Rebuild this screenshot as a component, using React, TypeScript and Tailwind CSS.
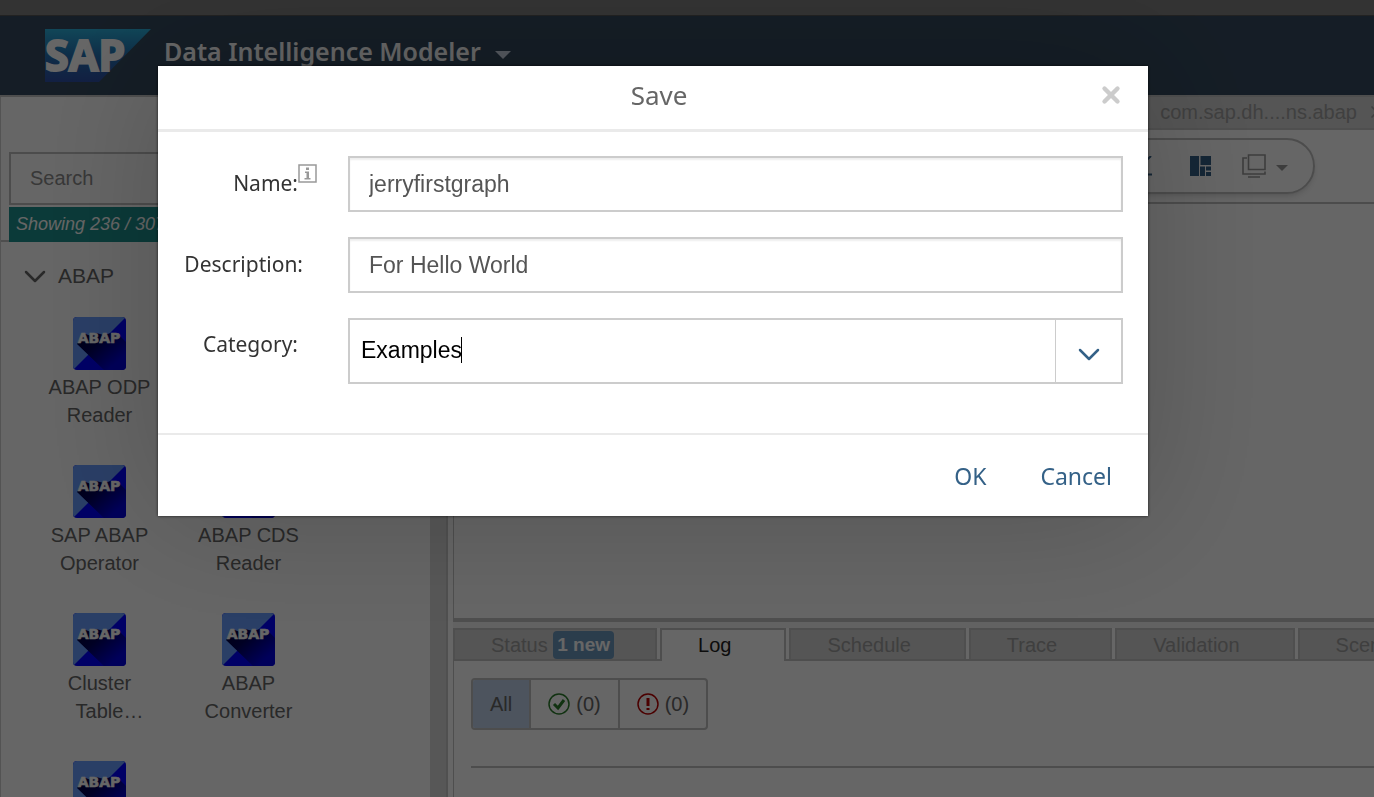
import { ReactNode } from "react";
import { X } from "lucide-react";

const operators = [
  "ABAP ODP Reader",
  "ABAP File Reader",
  "SAP ABAP Operator",
  "ABAP CDS Reader",
  "Cluster Table Splitter",
  "ABAP Converter",
  "SLT Connector",
];

function SapLogo() {
  return (
    <svg width="106" height="53" viewBox="0 0 106 53" role="img" aria-label="SAP">
      <defs>
        <linearGradient id="sap" x1="0" y1="0" x2="0" y2="1">
          <stop offset="0" stopColor="#2cb0dc" />
          <stop offset="0.5" stopColor="#2471b4" />
          <stop offset="1" stopColor="#2e4fa6" />
        </linearGradient>
      </defs>
      <path d="M0 0H106L54 53H0Z" fill="url(#sap)" />
      <text
        x="0"
        y="42"
        fill="#fff"
        stroke="#fff"
        strokeWidth="2"
        className="font-['Open_Sans',sans-serif] text-[43px] font-bold"
      >
        SAP
      </text>
    </svg>
  );
}

function AbapIcon() {
  return (
    <svg width="53" height="53" viewBox="0 0 53 53" aria-hidden="true" className="block">
      <defs>
        <linearGradient id="shade" x1="0.1" y1="0" x2="0.9" y2="0.7">
          <stop offset="0" stopColor="#000038" />
          <stop offset="0.4" stopColor="#00005a" />
          <stop offset="1" stopColor="#0000e0" />
        </linearGradient>
        <clipPath id="tile">
          <rect width="53" height="53" rx="4" />
        </clipPath>
      </defs>
      <g clipPath="url(#tile)">
        <rect width="53" height="53" fill="#0000ff" />
        <path d="M0 0H53L0 53Z" fill="#699dff" />
        <path d="M4 27L10 16L18 19L23 16L31 18L38 16L47 19L53 25V53H31Z" fill="url(#shade)" />
        <text
          x="26"
          y="26"
          textAnchor="middle"
          fill="#fff"
          stroke="#fff"
          strokeWidth="0.6"
          className="font-['DejaVu_Sans',sans-serif] text-[14px] font-bold"
        >
          ABAP
        </text>
      </g>
    </svg>
  );
}

function Caret({ className }: { className: string }) {
  return (
    <svg width="16" height="8" viewBox="0 0 16 8" aria-hidden="true" className={className}>
      <path d="M0 0H16L8 8Z" fill="currentColor" />
    </svg>
  );
}

function Chevron() {
  return (
    <svg width="22" height="13" viewBox="0 0 22 13" fill="none" stroke="currentColor" strokeWidth="2.5" strokeLinecap="round" strokeLinejoin="round" aria-hidden="true">
      <path d="M2 2L11 11L20 2" />
    </svg>
  );
}

function InfoIcon() {
  return (
    <svg width="19" height="19" viewBox="0 0 19 19" aria-hidden="true">
      <path d="M1 1H18V18H1Z" fill="none" stroke="#999" strokeWidth="1.5" />
      <path d="M8 3.5H11V6H8ZM7 7.500H11V14H12.500V15.500H6.500V14H8.500V9H7Z" fill="#999" />
    </svg>
  );
}

function Sidebar() {
  return (
    <aside className="flex w-[448px] shrink-0 border-l border-[#cfcfcf]">
      <div className="flex min-w-0 flex-1 flex-col">
        <div className="border-b-2 border-[#c4c4c4] pt-[55px] pr-3 pl-2">
          <input
            type="text"
            aria-label="Search"
            placeholder="Search"
            className="block h-[53px] w-full border-2 border-[#bfbfbf] bg-white px-[19px] text-[20px] placeholder:text-[#8c8c8c]"
          />
          <div className="-mb-[2px] mt-[2px] h-[35px] bg-[#1c918e] px-[7px] text-[18px] leading-[35px] text-white italic">
            Showing 236 / 307
          </div>
        </div>
        <button className="flex items-center gap-3 pt-[18px] pl-[23px] text-[21px] leading-[32px] text-[#666]">
          <Chevron />
          ABAP
        </button>
        <div className="mt-[25px] grid grid-cols-[149px_149px] gap-y-9 pl-6">
          {operators.map((name) => (
            <div key={name} className="flex flex-col items-center">
              <AbapIcon />
              <div className="mt-[3px] line-clamp-2 w-[107px] text-center text-[20px] leading-[28px] text-[#666]">
                {name}
              </div>
            </div>
          ))}
        </div>
      </div>
      <div className="w-[18px] border-r-2 border-[#c8c8c8] bg-[#dadada]" />
    </aside>
  );
}

function Toolbar() {
  return (
    <div className="border-b-2 border-[#bfbfbf] py-2 pr-[59px] pl-5">
      <div className="flex h-14 items-center justify-end rounded-full border-2 border-[#bfbfbf] pr-[25px] shadow-md">
        <svg width="22" height="20" viewBox="0 0 22 20" aria-hidden="true" className="mr-[38px]">
          <path d="M2 18L21 0M2 18.500H22" stroke="#346187" strokeWidth="2" fill="none" />
        </svg>
        <svg width="21" height="21" viewBox="0 0 21 21" aria-hidden="true" fill="#346187">
          <path d="M0 0H9V20H0ZM10.500 0H21V9H10.500ZM10 10.500H15V20H10ZM16 10.500H21V14.500H16ZM16 16H21V20H16Z" />
        </svg>
        <svg width="24" height="24" viewBox="0 0 24 24" aria-hidden="true" className="ml-[31px]" fill="none" stroke="#999" strokeWidth="1.6">
          <path d="M6.500 1H23V15.500H6.500ZM5 4H1V20H23V17.500M6 23H18" />
        </svg>
        <Caret className="mt-1 ml-[10px] w-3 text-[#999]" />
      </div>
    </div>
  );
}

function Tab({ children, active }: { children: ReactNode; active?: boolean }) {
  return (
    <button
      role="tab"
      aria-selected={active ? true : false}
      className={
        active
          ? "-mb-[2px] h-[33px] shrink-0 border-2 border-b-0 border-[#c4c4c4] bg-white pr-[53px] pl-9 pb-[2px] text-[#222]"
          : "h-[31px] shrink-0 border-2 border-b-0 border-[#c6c6c6] bg-[#d4d4d4] pr-[53px] pl-9 text-[#9e9e9e] first:pr-[41px]"
      }
    >
      {children}
    </button>
  );
}

function LogPanel() {
  return (
    <section className="h-[169px] shrink-0 overflow-hidden">
      <div role="tablist" className="flex gap-[3px] border-b-2 border-[#c4c4c4] text-[20px] leading-[28px]">
        <Tab>
          Status{" "}
          <span className="inline-block h-[28px] rounded bg-[#6c98be] px-1 align-top text-[19px] font-bold text-white">
            1 new
          </span>
        </Tab>
        <Tab active>Log</Tab>
        <Tab>Schedule</Tab>
        <Tab>Trace</Tab>
        <Tab>Validation</Tab>
        <Tab>Scenario</Tab>
      </div>
      <div className="h-full border-l border-[#c4c4c4] pt-[17px] pl-[17px] text-[20px] text-[#666]">
        <div className="inline-flex h-[52px] divide-x-2 divide-[#c0c0c0] overflow-hidden rounded border-2 border-[#c0c0c0] align-top">
          <button className="bg-[#c0d2eb] px-[17px]">All</button>
          <button className="flex items-center gap-[6px] px-[17px]">
            <svg width="22" height="22" viewBox="0 0 22 22" fill="none" stroke="#2b7d2b" aria-label="Success">
              <circle cx="11" cy="11" r="10" strokeWidth="1.5" />
              <path d="M6 11L10 15L16 7" strokeWidth="3" />
            </svg>
            (0)
          </button>
          <button className="flex items-center gap-[6px] px-[17px]">
            <svg width="22" height="22" viewBox="0 0 22 22" fill="none" stroke="#b00" aria-label="Errors">
              <circle cx="11" cy="11" r="10" strokeWidth="1.5" />
              <path d="M11 5V13M11 15V17" strokeWidth="3" />
            </svg>
            (0)
          </button>
        </div>
        <div className="mt-9 border-t-2 border-[#c0c0c0]" />
      </div>
    </section>
  );
}

function Field({ id, label, value, info, labelClass }: { id: string; label: string; value: string; info?: boolean; labelClass: string }) {
  return (
    <div className="flex items-center">
      <label htmlFor={id} className={`relative w-[190px] shrink-0 pb-[2px] text-right text-[21px] leading-[30px] text-[#333] ${labelClass}`}>
        {label}
        {info && (
          <span className="absolute -top-1 right-[31px]">
            <InfoIcon />
          </span>
        )}
      </label>
      <input
        id={id}
        type="text"
        defaultValue={value}
        className="h-14 min-w-0 flex-1 border-2 border-[#ccc] px-[19px] font-['Liberation_Sans',Arial,sans-serif] text-[23px] text-[#555] shadow-[inset_0_2px_2px_rgba(0,0,0,0.07)]"
      />
    </div>
  );
}

function SaveDialog() {
  return (
    <div
      role="dialog"
      aria-labelledby="save-title"
      className="w-full bg-white font-['Noto_Sans',sans-serif] shadow-[0_0_3px_rgba(0,0,0,0.7),0_0_130px_rgba(0,0,0,0.2)]"
    >
      <div className="flex h-[66px] items-center border-b-3 border-[#eaeaea] pr-6 pb-[6px] pl-[62px]">
        <h2 id="save-title" className="flex-1 text-center text-[26px] leading-[34px] text-[#666]">
          Save
        </h2>
        <button aria-label="Close" className="text-[#ccc]">
          <X size={26} strokeWidth={4} />
        </button>
      </div>
      <div className="flex flex-col gap-[25px] pt-6 pr-[25px] pb-[49px]">
        <Field id="name" label="Name:" value="jerryfirstgraph" info labelClass="pr-[50px]" />
        <Field id="description" label="Description:" value="For Hello World" labelClass="pr-[45px]" />
        <div className="flex items-start">
          <label htmlFor="category" className="w-[190px] shrink-0 pt-[11px] pr-[50px] text-right text-[21px] leading-[30px] text-[#333]">
            Category:
          </label>
          <div className="relative flex h-[66px] min-w-0 flex-1 border-2 border-[#ccc]">
            <input
              id="category"
              type="text"
              role="combobox"
              aria-expanded="false"
              defaultValue="Examples"
              className="min-w-0 flex-1 px-[11px] pb-[2px] font-['Liberation_Sans',Arial,sans-serif] text-[23px] text-black outline-none"
            />
            <span className="absolute top-[17px] left-[111px] h-[26px] w-px bg-black" />
            <button aria-label="Show categories" className="flex w-[66px] items-center justify-center border-l border-[#ccc] pt-[6px] text-[#346187]">
              <Chevron />
            </button>
          </div>
        </div>
      </div>
      <div className="flex h-[83px] items-center justify-end gap-[54px] border-t-2 border-[#eaeaea] pt-[2px] pr-9 text-[23px] text-[#346187]">
        <button>OK</button>
        <button>Cancel</button>
      </div>
    </div>
  );
}

export default function App() {
  return (
    <div className="relative flex h-screen flex-col overflow-hidden bg-white font-['Liberation_Sans',Arial,sans-serif]">
      <div className="h-4 shrink-0 border-b border-[#555] bg-[#808080]" />
      <header className="flex h-[79px] shrink-0 items-start bg-[#354a5f] pt-[13px] pl-[45px]">
        <SapLogo />
        <h1 className="ml-[13px] pt-1 font-['Noto_Sans',sans-serif] text-[25px] leading-[36px] font-semibold text-white">
          Data Intelligence Modeler
        </h1>
        <Caret className="mt-[22px] ml-[14px] text-[#d1dcec]" />
      </header>
      <div className="flex min-h-0 flex-1 border-t-2 border-[#c4c4c4]">
        <Sidebar />
        <main className="flex min-w-0 flex-1 flex-col pl-[5px]">
          <div className="flex min-h-0 flex-1 flex-col border-b-4 border-l border-[#c4c4c4]">
            <div className="flex h-[33px] shrink-0 items-center justify-end gap-[10px] overflow-hidden border-b-2 border-[#c6c6c6] bg-[#d4d4d4] pb-[2px] text-[20px] text-[#a0a0a0]">
              com.sap.dh....ns.abap
              <X size={20} strokeWidth={2} className="-mr-[13px] shrink-0" />
            </div>
            <Toolbar />
          </div>
          <div className="h-[6px] shrink-0 bg-[#f4f4f4]" />
          <LogPanel />
        </main>
      </div>
      <div className="fixed inset-0 flex items-start bg-black/60 pt-[66px] pr-[226px] pl-[158px]">
        <SaveDialog />
      </div>
    </div>
  );
}
